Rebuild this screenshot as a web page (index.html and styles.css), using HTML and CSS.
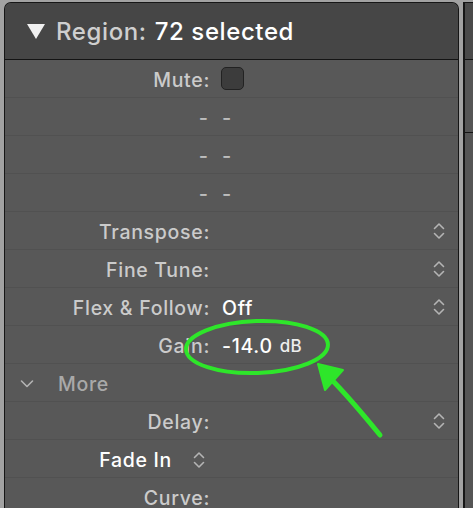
FILE: index.html
```html
<!DOCTYPE html>
<html>
<head>
<meta charset="utf-8">
<link rel="stylesheet" href="styles.css">
</head>
<body>
<div class="panel">
  <div class="header">
    <span class="tri"></span>
    <span class="h-label">Region:</span>
    <span class="h-value">72 selected</span>
  </div>
  <div class="rows">
    <div class="row"><span class="label">Mute:</span><span class="value"><span class="check"></span></span></div>
    <div class="row"><span class="label dash">-</span><span class="value dash">-</span></div>
    <div class="row"><span class="label dash">-</span><span class="value dash">-</span></div>
    <div class="row"><span class="label dash">-</span><span class="value dash">-</span></div>
    <div class="row"><span class="label">Transpose:</span><span class="value"></span><span class="stepper"><svg viewBox="0 0 12 20" width="12" height="20"><path d="M1.5 7.5 L6 3 L10.5 7.5 M1.5 12.5 L6 17 L10.5 12.5" /></svg></span></div>
    <div class="row"><span class="label">Fine Tune:</span><span class="value"></span><span class="stepper"><svg viewBox="0 0 12 20" width="12" height="20"><path d="M1.5 7.5 L6 3 L10.5 7.5 M1.5 12.5 L6 17 L10.5 12.5" /></svg></span></div>
    <div class="row"><span class="label">Flex &amp; Follow:</span><span class="value white">Off</span><span class="stepper"><svg viewBox="0 0 12 20" width="12" height="20"><path d="M1.5 7.5 L6 3 L10.5 7.5 M1.5 12.5 L6 17 L10.5 12.5" /></svg></span></div>
    <div class="row"><span class="label">Gain:</span><span class="value white">-14.0 <span class="unit">dB</span></span></div>
    <div class="row more"><span class="more-chev"><svg viewBox="0 0 14 10" width="14" height="10"><path d="M1.5 2 L7 7.5 L12.5 2" /></svg></span><span class="more-text">More</span></div>
    <div class="row"><span class="label">Delay:</span><span class="value"></span><span class="stepper"><svg viewBox="0 0 12 20" width="12" height="20"><path d="M1.5 7.5 L6 3 L10.5 7.5 M1.5 12.5 L6 17 L10.5 12.5" /></svg></span></div>
    <div class="row"><span class="label fade"><span class="white">Fade In</span><span class="stepper inline"><svg viewBox="0 0 12 20" width="12" height="20"><path d="M1.5 7.5 L6 3 L10.5 7.5 M1.5 12.5 L6 17 L10.5 12.5" /></svg></span></span></div>
    <div class="row"><span class="label">Curve:</span></div>
  </div>
</div>
<div class="side">
  <div class="side-head"></div>
  <div class="side-row"></div>
</div>
<svg class="annot" viewBox="0 0 473 508" width="473" height="508">
  <ellipse cx="257" cy="347" rx="71" ry="26" transform="rotate(-2 257 347)" />
  <path class="shaft" d="M380 435 C 362 413, 345 393, 330 378" />
  <polygon class="head" points="318,364 343,370 325,390" />
</svg>
</body>
</html>
```
FILE: styles.css
```css
html, body {
  margin: 0;
  padding: 0;
}
body {
  width: 473px;
  height: 508px;
  overflow: hidden;
  background: #a2a2a2;
  display: flex;
  align-items: flex-start;
  position: relative;
  font-family: "Inter", "Roboto", "Liberation Sans", sans-serif;
  font-weight: 500;
}
.panel {
  margin-top: 2px;
  margin-left: 4px;
  width: 453px;
  height: 520px;
  border: 1.5px solid #161616;
  border-bottom: none;
  border-radius: 7px 7px 0 0;
  background: #585858;
  overflow: hidden;
  flex: none;
}
.header {
  height: 56px;
  background: #464646;
  border-bottom: 1.5px solid #141414;
  display: flex;
  align-items: center;
  padding-left: 22px;
  font-size: 24px;
  letter-spacing: 0.6px;
}
.tri {
  width: 0;
  height: 0;
  border-left: 9px solid transparent;
  border-right: 9px solid transparent;
  border-top: 15px solid #f0f0f0;
  margin-right: 11px;
}
.h-label {
  color: #cfcfcf;
  margin-right: 8px;
}
.h-value {
  color: #ffffff;
}
.row {
  height: 38px;
  padding-top: 3px;
  box-sizing: border-box;
  border-bottom: 1px solid #515151;
  display: flex;
  align-items: center;
  font-size: 19.5px;
  letter-spacing: 0.7px;
  color: #cbcbcb;
}
.label {
  width: 205px;
  text-align: right;
  flex: none;
}
.dash {
  color: #bdbdbd;
  font-size: 20px;
  letter-spacing: 0;
}
.label.dash {
  width: 203px;
}
.value {
  margin-left: 12px;
  flex: 1;
  display: flex;
  align-items: center;
}
.value.dash {
  margin-left: 14px;
}
.white {
  color: #ffffff;
}
.unit {
  font-size: 17px;
  margin-left: 7px;
  color: #eeeeee;
  letter-spacing: 0.2px;
}
.check {
  width: 23px;
  height: 23px;
  border-radius: 5px;
  background: #3c3c3c;
  border: 1px solid #222;
  box-sizing: border-box;
  margin-left: -1px;
  margin-top: -3px;
}
.stepper {
  width: 12px;
  height: 20px;
  margin-right: 13px;
  margin-left: auto;
  display: block;
  margin-top: -2px;
}
.stepper svg {
  display: block;
}
.stepper path, .more-chev path {
  fill: none;
  stroke: #b4b4b4;
  stroke-width: 1.6;
  stroke-linecap: round;
  stroke-linejoin: round;
}
.fade {
  display: flex;
  align-items: center;
  justify-content: flex-end;
  width: 200px;
}
.fade .white {
  margin-right: 21px;
}
.stepper.inline {
  margin: 0;
}
.more-chev {
  margin-left: 15px;
  width: 14px;
  height: 10px;
  display: block;
}
.more-chev svg {
  display: block;
}
.more-text {
  margin-left: 24px;
  color: #a9a9a9;
}
.side {
  margin-left: 4px;
  flex: 1;
  height: 520px;
  margin-top: 2px;
  border-left: 2px solid #161616;
  border-top: 1.5px solid #161616;
  background: #555555;
}
.side-head {
  height: 56px;
  background: #4a4a4a;
  border-bottom: 1.5px solid #141414;
}
.side-row {
  height: 72px;
  border-bottom: 1.5px solid #141414;
}
.annot {
  position: absolute;
  left: 0;
  top: 0;
  pointer-events: none;
}
.annot ellipse {
  fill: none;
  stroke: #2ee62a;
  stroke-width: 4;
}
.annot .shaft {
  fill: none;
  stroke: #2ee62a;
  stroke-width: 5;
  stroke-linecap: round;
}
.annot .head {
  fill: #2ee62a;
  stroke: #2ee62a;
  stroke-width: 2;
  stroke-linejoin: round;
}
```
